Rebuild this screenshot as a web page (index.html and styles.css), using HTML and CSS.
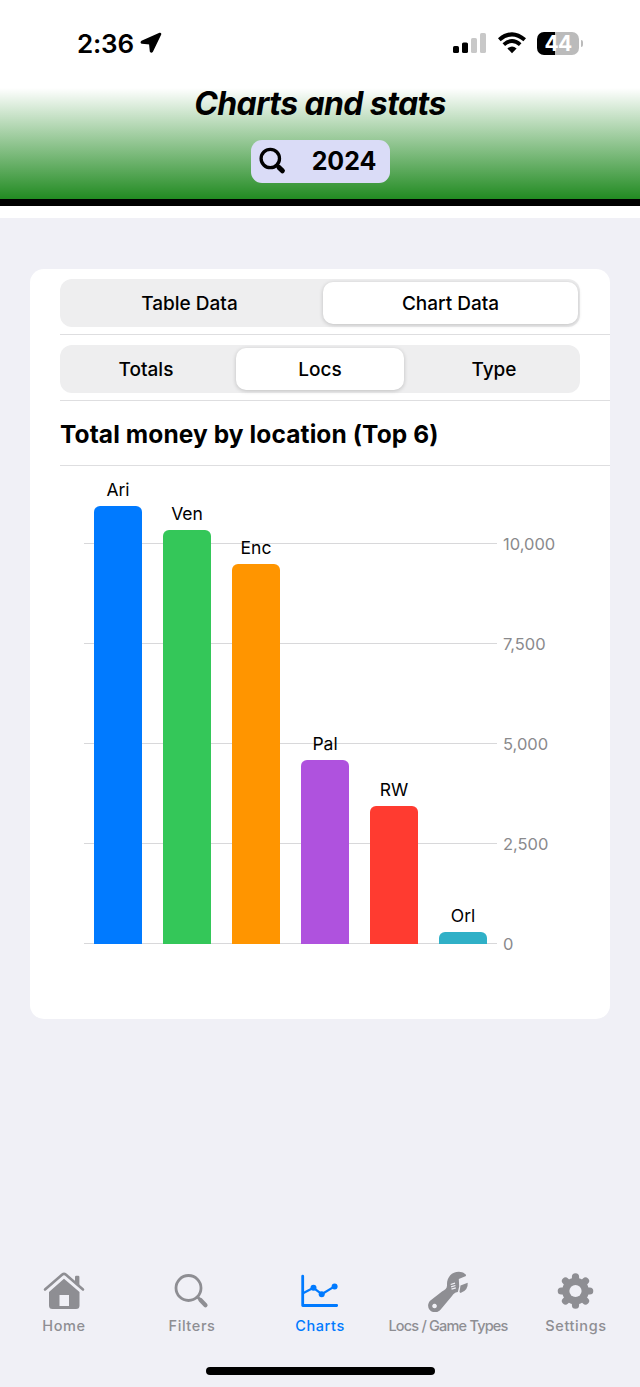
FILE: index.html
```html
<!DOCTYPE html>
<html lang="en">
<head>
    <meta charset="UTF-8">
    <meta name="viewport" content="width=device-width, initial-scale=1.0">
    <title>Charts and stats</title>
    <link rel="stylesheet" href="styles.css">
</head>
<body>

    <!-- Status bar -->
    <div class="status-bar">
        <div class="clock">
            <span class="time">2:36</span>
            <svg width="22" height="22" viewBox="0 0 22 22"><path d="M19.8 1.6 L1.8 9.5 Q.8 10.4 2 11 L9.8 11.6 L10.6 19.4 Q11.4 20.6 12.2 19.4 L20.4 2.4 Q20.8 1.3 19.8 1.6Z" stroke="#000" stroke-width="1.6" stroke-linejoin="round"/></svg>
        </div>
        <div class="indicators">
            <svg width="34" height="22" viewBox="0 0 34 22">
                <rect x="0" y="14" width="6" height="7" rx="1.6"/>
                <rect x="9" y="10.5" width="6" height="10.5" rx="1.6"/>
                <rect class="dim" x="18" y="6" width="6" height="15" rx="1.6"/>
                <rect class="dim" x="27" y="1" width="6" height="20" rx="1.6"/>
            </svg>
            <svg width="30" height="22" viewBox="0 0 30 22">
                <path d="M2.3 7.8 Q15 -3.2 27.7 7.8" fill="none" stroke="#000" stroke-width="4"/>
                <path d="M6.8 12.6 Q15 5.4 23.2 12.6" fill="none" stroke="#000" stroke-width="3.8"/>
                <path d="M10.4 16.5 Q15 12.4 19.6 16.5 L15 21.2Z"/>
            </svg>
            <div class="battery"><span>44</span></div>
        </div>
    </div>

    <!-- Header -->
    <div class="header">
        <h1>Charts and stats</h1>
        <button class="year">
            <svg width="28" height="28" viewBox="0 0 28 28" fill="none" stroke="#000" stroke-linecap="round"><circle cx="11.3" cy="11.5" r="9.2" stroke-width="3.3"/><path d="M18 18.2 L20 20" stroke-width="3.4"/><path d="M20 20.4 L23.4 23.8" stroke-width="5"/></svg>
            <span>2024</span>
        </button>
    </div>

    <!-- Content -->
    <div class="content">
        <div class="card">
            <div class="row">
                <div class="segmented two">
                    <span>Table Data</span>
                    <span class="active">Chart Data</span>
                </div>
            </div>
            <div class="row">
                <div class="segmented three">
                    <span>Totals</span>
                    <span class="active">Locs</span>
                    <span>Type</span>
                </div>
            </div>
            <div class="row title">
                <h2>Total money by location (Top 6)</h2>
            </div>
            <div class="chart">
                <div class="plot">
                    <div class="grid-lines"><i></i><i></i><i></i><i></i><i></i></div>
                    <div class="bars">
                        <div class="bar-group"><span>Ari</span><div class="bar blue" style="height: 438px"></div></div>
                        <div class="bar-group"><span>Ven</span><div class="bar green" style="height: 414px"></div></div>
                        <div class="bar-group"><span>Enc</span><div class="bar orange" style="height: 380px"></div></div>
                        <div class="bar-group"><span>Pal</span><div class="bar purple" style="height: 184px"></div></div>
                        <div class="bar-group"><span>RW</span><div class="bar red" style="height: 138.5px"></div></div>
                        <div class="bar-group"><span>Orl</span><div class="bar teal" style="height: 12px"></div></div>
                    </div>
                </div>
                <div class="axis">
                    <span>10,000</span>
                    <span>7,500</span>
                    <span>5,000</span>
                    <span>2,500</span>
                    <span>0</span>
                </div>
            </div>
        </div>
    </div>

    <!-- Tab bar -->
    <div class="tab-bar">
        <div class="tab">
            <svg width="44" height="44" viewBox="0 0 44 44" fill="currentColor">
                <path d="M3 21.5 L20.3 6.6 Q22 5.2 23.7 6.6 L41 21.5" fill="none" stroke="currentColor" stroke-width="2.6" stroke-linecap="round" stroke-linejoin="round"/>
                <path d="M33 9 Q33 7.8 34.2 7.8 H36.2 Q37.4 7.8 37.4 9 V17.5 L33 13.7Z"/>
                <path fill-rule="evenodd" d="M22 10.8 L37.5 24 V37.5 Q37.5 41 34 41 H10.5 Q7 41 7 37.5 V24Z M17.5 27 V38 H27 V27Z"/>
            </svg>
            <span>Home</span>
        </div>
        <div class="tab">
            <svg width="44" height="44" viewBox="0 0 44 44" fill="none" stroke="currentColor" stroke-linecap="round"><circle cx="18.5" cy="20" r="12.5" stroke-width="2.8"/><path d="M27.8 29.3 L30 31.5" stroke-width="3"/><path d="M30.5 32 L35.5 37.2" stroke-width="4.2"/></svg>
            <span>Filters</span>
        </div>
        <div class="tab active">
            <svg width="44" height="44" viewBox="0 0 44 44" fill="none" stroke="currentColor" stroke-linecap="round" stroke-linejoin="round">
                <path d="M4.7 8.2 V37.5 H38.7" stroke-width="2.8"/>
                <path d="M5.5 25 L15.5 19.8 L23.7 26.2 L36.6 18.4" stroke-width="2.2"/>
                <g fill="currentColor" stroke="none"><circle cx="15.5" cy="19.8" r="3"/><circle cx="23.7" cy="26.2" r="3"/><circle cx="36.6" cy="18.4" r="3"/></g>
            </svg>
            <span>Charts</span>
        </div>
        <div class="tab wide">
            <svg width="44" height="44" viewBox="0 0 44 44" fill="currentColor">
                <path fill-rule="evenodd" d="M21 17.5 C20.5 8 27.5 1.8 37 4.4 L39.8 6.6 L40 8 L32.8 11 L33.2 18.5 L31.8 24 C28.5 24.5 27.5 26 26 28 L14.7 41.5 C8.5 48.5 -2 41 3.8 33 L16 23.500 C19 21.500 21 20.5 21 17.5Z M8.500 35.700 a2.300 2.300 0 1 0 .1 0Z"/>
                <path d="M34.5 17.5 L41.700 14.800 Q42.400 22.500 34.500 25 L33.500 24Z"/>
                <path d="M24.700 16.500 L29 15.200 M25.100 18.800 L29.400 17.500 M25.500 21.100 L29.800 19.800" fill="none" stroke="#f0f0f6" stroke-width="1.300"/>
            </svg>
            <span>Locs / Game Types</span>
        </div>
        <div class="tab">
            <svg width="44" height="44" viewBox="0 0 44 44">
                <g stroke="currentColor" stroke-width="7.2" stroke-linecap="round">
                    <path d="M21.500 8.800 V37.200 M7.300 23 H35.700 M11.500 13 L31.500 33 M31.500 13 L11.500 33"/>
                </g>
                <circle cx="21.500" cy="23" r="13.300" fill="currentColor"/>
                <circle cx="21.500" cy="23" r="6.100" fill="#f0f0f6"/>
            </svg>
            <span>Settings</span>
        </div>
    </div>
    <div class="home-indicator"></div>

</body>
</html>
```
FILE: styles.css
```css
* { margin: 0; padding: 0; box-sizing: border-box; }
body {
    font-family: Inter, 'Liberation Sans', sans-serif;
    background: #f0f0f6;
    color: #000;
    width: 640px;
    height: 1387px;
    display: flex;
    flex-direction: column;
    overflow: hidden;
}
svg { display: block; flex: none; }
span, h1, h2 { white-space: nowrap; }

/* Status bar */
.status-bar {
    height: 88px;
    flex: none;
    background: #fff;
    display: flex;
    justify-content: space-between;
    align-items: center;
    padding: 0 61px 2px 77px;
}
.clock { display: flex; align-items: center; gap: 6px; }
.time { font-size: 26px; font-weight: 600; letter-spacing: -0.2px; }
.indicators { display: flex; align-items: center; gap: 10px; }
.dim { fill: #c8c8c8; }
.battery {
    position: relative;
    width: 42px;
    height: 23px;
    border-radius: 7px;
    background: linear-gradient(90deg, #000 44%, #bbb 44%);
    color: #fff;
    font-size: 21px;
    font-weight: 700;
    letter-spacing: -0.8px;
    line-height: 23px;
    text-align: center;
}
.battery::after {
    content: "";
    position: absolute;
    right: -4px;
    top: 8px;
    width: 2.5px;
    height: 7px;
    border-radius: 0 3px 3px 0;
    background: #bbb;
}

/* Header */
.header {
    height: 130px;
    flex: none;
    display: flex;
    flex-direction: column;
    align-items: center;
    background: linear-gradient(#fff, #228b22) 0 0 / 100% 111px no-repeat, linear-gradient(#000, #000) 0 111px / 100% 7px no-repeat, #fff;
}
.header h1 {
    font-size: 32px;
    line-height: 32px;
    font-style: italic;
    font-weight: 700;
    letter-spacing: -0.6px;
}
.year {
    width: 139px;
    height: 43px;
    margin-top: 19.5px;
    padding: 0 13px 1px 8px;
    border: none;
    border-radius: 11px;
    background: #dadcf7;
    color: #000;
    display: flex;
    justify-content: space-between;
    align-items: center;
    font-family: inherit;
    font-size: 25px;
    font-weight: 700;
}

/* Card */
.content { flex: 1; padding: 51px 30px 0; }
.card {
    height: 750px;
    background: #fff;
    border-radius: 14px;
}
.row {
    height: 66px;
    margin-left: 30px;
    padding: 10px 30px 0 0;
    border-bottom: 1px solid #dedee0;
}
.row.title { height: 65px; padding-top: 18px; }
.row h2 { font-size: 24.5px; line-height: 30px; font-weight: 700; letter-spacing: 0.1px; }
.segmented {
    height: 48px;
    padding: 3px 2px;
    border-radius: 12px;
    background: #eeeeef;
    display: grid;
    justify-content: space-between;
    font-size: 19px;
    font-weight: 450;
}
.segmented.two { grid-template-columns: 255px 255px; }
.segmented.three { grid-template-columns: 168px 168px 168px; }
.segmented span { display: flex; justify-content: center; align-items: center; }
.segmented .active {
    background: #fff;
    border-radius: 10px;
    font-weight: 500;
    box-shadow: 0 1px 4px rgba(0, 0, 0, 0.2);
}

/* Chart */
.chart { display: flex; gap: 6px; margin: 28px 0 0 54px; }
.plot { position: relative; width: 413px; height: 450px; }
.grid-lines {
    position: absolute;
    left: 0; right: 0; bottom: 0;
    height: 401px;
    display: flex;
    flex-direction: column;
    justify-content: space-between;
}
.grid-lines i { height: 1px; background: #d8d8da; }
.bars {
    position: relative;
    height: 100%;
    padding-left: 10px;
    display: flex;
    align-items: flex-end;
    gap: 21px;
}
.bar-group {
    width: 48px;
    display: flex;
    flex-direction: column;
    align-items: center;
    font-size: 17.5px;
    line-height: 20px;
    gap: 6px;
}
.bar { width: 48px; border-radius: 6px 6px 0 0; }
.blue { background: #007aff; }
.green { background: #34c759; }
.orange { background: #ff9500; }
.purple { background: #af52de; }
.red { background: #ff3b30; }
.teal { background: #30b0c7; }
.axis {
    height: 420px;
    margin-top: 40px;
    display: flex;
    flex-direction: column;
    justify-content: space-between;
    color: #8a8a8d;
    font-size: 16.5px;
    line-height: 20px;
}

/* Tab bar */
.tab-bar {
    height: 82px;
    flex: none;
    display: grid;
    grid-template-columns: repeat(5, 128px);
    color: #8e8e93;
}
.tab {
    display: flex;
    flex-direction: column;
    align-items: center;
    gap: 4px;
    font-size: 14.5px;
    line-height: 19px;
    font-weight: 500;
    letter-spacing: 0.6px;
}
.tab.active { color: #007aff; }
.tab.wide { letter-spacing: -0.8px; }
.home-indicator {
    width: 229px;
    height: 8px;
    flex: none;
    margin: 17px auto 12px;
    border-radius: 4px;
    background: #000;
}
```
